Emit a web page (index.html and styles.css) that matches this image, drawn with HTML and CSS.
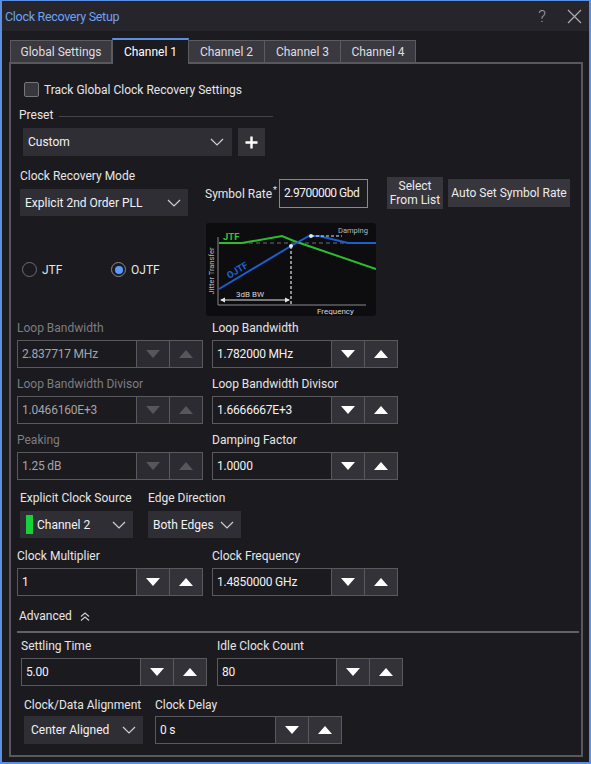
FILE: index.html
```html
<!DOCTYPE html>
<html lang="en">
<head>
    <meta charset="UTF-8">
    <title>Clock Recovery Setup</title>
    <link rel="stylesheet" href="styles.css">
</head>
<body>
    <div class="window">
        <!-- Title bar -->
        <div class="titlebar">
            <span class="title">Clock Recovery Setup</span>
            <span class="help">?</span>
            <svg class="close" width="15" height="15" viewBox="0 0 15 15"><path d="M1 1L14 14M14 1L1 14" stroke="#a9a9ad" stroke-width="1.3" fill="none"/></svg>
        </div>

        <!-- Tabs -->
        <div class="tabs">
            <div class="tab w-global">Global Settings</div>
            <div class="tab active w-ch1">Channel 1</div>
            <div class="tab w-ch2">Channel 2</div>
            <div class="tab w-ch3">Channel 3</div>
            <div class="tab w-ch4">Channel 4</div>
        </div>

        <div class="panel">
            <div class="chk-row">
                <span class="checkbox"></span>
                <span class="chk-label">Track Global Clock Recovery Settings</span>
            </div>

            <div class="preset-head">
                <span>Preset</span>
                <span class="rule"></span>
            </div>
            <div class="preset-row">
                <div class="dropdown w-preset">
                    <span>Custom</span>
                    <svg class="chev" width="14" height="8" viewBox="0 0 14 8"><path d="M1 1L7 7L13 1" stroke="#cfcfd3" stroke-width="1.2" fill="none"/></svg>
                </div>
                <div class="plus-btn">
                    <svg width="13" height="13" viewBox="0 0 13 13"><path d="M6.5 0.5V12.5M0.5 6.5H12.5" stroke="#fff" stroke-width="2.4"/></svg>
                </div>
            </div>

            <!-- Mode and symbol rate -->
            <div class="mode-row">
                <div class="mode-col">
                    <div class="lbl">Clock Recovery Mode</div>
                    <div class="dropdown w-mode">
                        <span>Explicit 2nd Order PLL</span>
                        <svg class="chev" width="14" height="8" viewBox="0 0 14 8"><path d="M1 1L7 7L13 1" stroke="#cfcfd3" stroke-width="1.2" fill="none"/></svg>
                    </div>
                </div>
                <div class="rate-group">
                    <span class="rate-label">Symbol Rate<sup>*</sup></span>
                    <div class="rate-input">2.9700000 Gbd</div>
                    <div class="btn select-btn">Select<br>From List</div>
                    <div class="btn auto-btn">Auto Set Symbol Rate</div>
                </div>
            </div>

            <!-- Transfer function choice -->
            <div class="tf-row">
                <div class="radios">
                    <label class="radio-item"><span class="radio"></span>JTF</label>
                    <label class="radio-item"><span class="radio on"></span>OJTF</label>
                </div>
                <svg class="diagram" width="170" height="93" viewBox="0 0 170 93">
                    <rect x="0" y="0" width="170" height="93" rx="3" fill="#0d0d10"/>
                    <line x1="12" y1="14" x2="12" y2="82" stroke="#8a8a8e" stroke-width="1"/>
                    <line x1="12" y1="82" x2="160" y2="82" stroke="#8a8a8e" stroke-width="1"/>
                    <text x="8" y="48" transform="rotate(-90 8 48)" text-anchor="middle" class="dg-small">Jitter Transfer</text>
                    <text x="111" y="91" class="dg-text">Frequency</text>
                    <line x1="36" y1="20" x2="170" y2="20" stroke="#6e6e72" stroke-width="1" stroke-dasharray="4 3"/>
                    <polyline points="13,20 36,20 76,13 88,18 170,46" fill="none" stroke="#2fbd2f" stroke-width="2"/>
                    <text x="17" y="17" class="dg-jtf">JTF</text>
                    <polyline points="13,66 85,23 103,13 113,13 142,20 170,20" fill="none" stroke="#1d5fd0" stroke-width="2"/>
                    <text x="33" y="50" transform="rotate(-31 33 50)" text-anchor="middle" class="dg-ojtf">OJTF</text>
                    <line x1="85" y1="23" x2="85" y2="82" stroke="#e6e6e6" stroke-width="1.2" stroke-dasharray="3 2"/>
                    <circle cx="85" cy="23" r="2" fill="#e6e6e6"/>
                    <line x1="105" y1="13" x2="136" y2="13" stroke="#e6e6e6" stroke-width="1.2" stroke-dasharray="3 2"/>
                    <circle cx="105" cy="13" r="2" fill="#e6e6e6"/>
                    <text x="132" y="10" class="dg-small">Damping</text>
                    <line x1="15" y1="77" x2="83" y2="77" stroke="#e6e6e6" stroke-width="1"/>
                    <path d="M14 77L19 74.5V79.5Z M84 77L79 74.5V79.5Z" fill="#e6e6e6"/>
                    <text x="44" y="74" text-anchor="middle" class="dg-text">3dB BW</text>
                </svg>
            </div>

            <!-- Loop parameters -->
            <div class="grid">
                <div class="field">
                    <div class="lbl off">Loop Bandwidth</div>
                    <div class="spin off"><span class="val">2.837717 MHz</span><span class="sbtn"><i class="dn"></i></span><span class="sbtn"><i class="up"></i></span></div>
                </div>
                <div class="field">
                    <div class="lbl">Loop Bandwidth</div>
                    <div class="spin"><span class="val">1.782000 MHz</span><span class="sbtn"><i class="dn"></i></span><span class="sbtn"><i class="up"></i></span></div>
                </div>
                <div class="field">
                    <div class="lbl off">Loop Bandwidth Divisor</div>
                    <div class="spin off"><span class="val">1.0466160E+3</span><span class="sbtn"><i class="dn"></i></span><span class="sbtn"><i class="up"></i></span></div>
                </div>
                <div class="field">
                    <div class="lbl">Loop Bandwidth Divisor</div>
                    <div class="spin"><span class="val">1.6666667E+3</span><span class="sbtn"><i class="dn"></i></span><span class="sbtn"><i class="up"></i></span></div>
                </div>
                <div class="field">
                    <div class="lbl off">Peaking</div>
                    <div class="spin off"><span class="val">1.25 dB</span><span class="sbtn"><i class="dn"></i></span><span class="sbtn"><i class="up"></i></span></div>
                </div>
                <div class="field">
                    <div class="lbl">Damping Factor</div>
                    <div class="spin"><span class="val">1.0000</span><span class="sbtn"><i class="dn"></i></span><span class="sbtn"><i class="up"></i></span></div>
                </div>
            </div>

            <!-- Clock source -->
            <div class="src-row">
                <div class="src-col">
                    <div class="lbl">Explicit Clock Source</div>
                    <div class="dropdown w-src">
                        <span class="swatch"></span>
                        <span>Channel 2</span>
                        <svg class="chev" width="14" height="8" viewBox="0 0 14 8"><path d="M1 1L7 7L13 1" stroke="#cfcfd3" stroke-width="1.2" fill="none"/></svg>
                    </div>
                </div>
                <div class="edge-col">
                    <div class="lbl">Edge Direction</div>
                    <div class="dropdown w-edge">
                        <span>Both Edges</span>
                        <svg class="chev" width="14" height="8" viewBox="0 0 14 8"><path d="M1 1L7 7L13 1" stroke="#cfcfd3" stroke-width="1.2" fill="none"/></svg>
                    </div>
                </div>
            </div>

            <div class="grid mult">
                <div class="field">
                    <div class="lbl">Clock Multiplier</div>
                    <div class="spin"><span class="val">1</span><span class="sbtn"><i class="dn"></i></span><span class="sbtn"><i class="up"></i></span></div>
                </div>
                <div class="field">
                    <div class="lbl">Clock Frequency</div>
                    <div class="spin"><span class="val">1.4850000 GHz</span><span class="sbtn"><i class="dn"></i></span><span class="sbtn"><i class="up"></i></span></div>
                </div>
            </div>

            <!-- Advanced -->
            <div class="adv">
                <span>Advanced</span>
                <svg class="adv-icon" width="10" height="9" viewBox="0 0 10 9"><path d="M1 4.5L5 1L9 4.5M1 8.5L5 5L9 8.5" stroke="#cfcfd3" stroke-width="1.1" fill="none"/></svg>
            </div>
            <div class="adv-rule"></div>

            <div class="grid settle">
                <div class="field">
                    <div class="lbl">Settling Time</div>
                    <div class="spin"><span class="val">5.00</span><span class="sbtn"><i class="dn"></i></span><span class="sbtn"><i class="up"></i></span></div>
                </div>
                <div class="field">
                    <div class="lbl">Idle Clock Count</div>
                    <div class="spin"><span class="val">80</span><span class="sbtn"><i class="dn"></i></span><span class="sbtn"><i class="up"></i></span></div>
                </div>
            </div>

            <div class="align-row">
                <div class="align-col">
                    <div class="lbl">Clock/Data Alignment</div>
                    <div class="dropdown w-align">
                        <span>Center Aligned</span>
                        <svg class="chev" width="14" height="8" viewBox="0 0 14 8"><path d="M1 1L7 7L13 1" stroke="#cfcfd3" stroke-width="1.2" fill="none"/></svg>
                    </div>
                </div>
                <div class="delay-col">
                    <div class="lbl">Clock Delay</div>
                    <div class="spin"><span class="val">0 s</span><span class="sbtn"><i class="dn"></i></span><span class="sbtn"><i class="up"></i></span></div>
                </div>
            </div>
        </div>
    </div>
</body>
</html>
```

FILE: styles.css
```css
* {
    margin: 0;
    padding: 0;
    box-sizing: border-box;
}

body {
    background-color: #1b1a1f;
    color: #e6e6e8;
    font-family: Roboto, "Liberation Sans", sans-serif;
    font-size: 12px;
}

.window {
    width: 591px;
    height: 764px;
    border: 2px solid #5b8fe3;
    border-top-width: 1px;
    background-color: #1c1b20;
    overflow: hidden;
}

/* Title bar */
.titlebar {
    height: 30px;
    background-color: #26252b;
    display: flex;
    align-items: center;
    padding: 0 7px 0 3px;
}

.title {
    flex: 1;
    color: #6ea2f5;
    font-size: 12.5px;
    letter-spacing: -0.3px;
}

.help {
    color: #9c9ca0;
    font-size: 17px;
    font-weight: 300;
    margin-right: 21px;
}

/* Tabs */
.tabs {
    height: 31px;
    display: flex;
    align-items: flex-end;
    padding-left: 8px;
}

.tab {
    height: 22px;
    background-color: #3a3940;
    border: 1px solid #5c5b61;
    border-bottom: none;
    display: flex;
    align-items: center;
    justify-content: center;
    color: #dedee0;
}

.tab + .tab {
    border-left: none;
}

.tab.active {
    height: 26px;
    margin-bottom: -2px;
    background-color: #1b1a1f;
    border-top: 2px solid #5b8fe3;
    border-left: 1px solid #5c5b61;
    border-right: 1px solid #5c5b61;
    color: #fff;
    position: relative;
    z-index: 1;
}

.w-global { width: 102px; }
.w-ch1 { width: 77px; }
.w-ch2 { width: 76px; }
.w-ch3 { width: 76px; }
.w-ch4 { width: 75px; }

/* Panel */
.panel {
    margin-left: 7px;
    width: 574px;
    height: 695px;
    border: 2px solid #59585d;
    padding: 0 6px;
    background-color: #1b1a1f;
}

.lbl {
    height: 14px;
    line-height: 14px;
    white-space: nowrap;
    color: #e6e6e8;
}

.lbl.off {
    color: #7d7d80;
}

.chk-row {
    margin-top: 18px;
    margin-left: 7px;
    height: 15px;
    display: flex;
    align-items: center;
}

.checkbox {
    width: 15px;
    height: 15px;
    border: 1px solid #77767b;
    border-radius: 2px;
    background-color: #38373d;
}

.chk-label {
    margin-left: 5px;
}

.preset-head {
    margin-top: 11px;
    margin-left: 2px;
    width: 254px;
    height: 14px;
    display: flex;
    align-items: center;
}

.preset-head .rule {
    flex: 1;
    height: 1px;
    margin-left: 6px;
    margin-top: 3px;
    background-color: #45444a;
}

.preset-row {
    margin-top: 6px;
    margin-left: 6px;
    height: 28px;
    display: flex;
}

.dropdown {
    height: 27px;
    background-color: #2f2e34;
    display: flex;
    align-items: center;
    padding: 0 7px 0 5px;
    color: #f2f2f4;
    white-space: nowrap;
}

.dropdown .chev {
    margin-left: auto;
}

.w-preset { width: 209px; height: 28px; }
.w-preset .chev { margin-right: 1px; }

.plus-btn {
    width: 27px;
    height: 28px;
    margin-left: 6px;
    background-color: #333238;
    display: flex;
    align-items: center;
    justify-content: center;
}

/* Mode / symbol rate */
.mode-row {
    margin-top: 13px;
    display: flex;
}

.mode-col {
    margin-left: 3px;
    width: 168px;
}

.mode-col .dropdown {
    margin-top: 6px;
}

.w-mode { width: 168px; }

.rate-group {
    margin-left: 17px;
    margin-top: 8px;
    height: 32px;
    display: flex;
    align-items: center;
}

.rate-label {
    width: 74px;
    white-space: nowrap;
}

.rate-label sup {
    font-size: 9px;
    vertical-align: 5px;
    margin-left: 1px;
}

.rate-input {
    width: 89px;
    height: 29px;
    border: 1px solid #8a898e;
    background-color: #1b1a1f;
    padding-left: 4px;
    line-height: 27px;
    color: #f2f2f4;
    letter-spacing: -0.5px;
    white-space: nowrap;
    overflow: hidden;
}

.btn {
    background-color: #37363c;
    color: #ececee;
    text-align: center;
    display: flex;
    align-items: center;
    justify-content: center;
}

.select-btn {
    width: 56px;
    height: 32px;
    margin-left: 19px;
    line-height: 14px;
}

.auto-btn {
    width: 122px;
    height: 28px;
    margin-left: 5px;
}

/* JTF / OJTF */
.tf-row {
    margin-top: 7px;
    height: 93px;
    display: flex;
}

.radios {
    width: 189px;
    padding-left: 5px;
    display: flex;
    align-items: center;
}

.radio-item {
    display: flex;
    align-items: center;
    width: 89px;
}

.radio {
    width: 15px;
    height: 15px;
    border: 1.5px solid #6f6e73;
    border-radius: 50%;
    margin-right: 5px;
    display: flex;
    align-items: center;
    justify-content: center;
}

.radio.on {
    border-color: #8a898e;
}

.radio.on::after {
    content: "";
    width: 8px;
    height: 8px;
    border-radius: 50%;
    background-color: #5b9bff;
}

.diagram text {
    font-family: Roboto, "Liberation Sans", sans-serif;
}

.dg-small {
    font-size: 7.5px;
    fill: #b8b8bc;
}

.dg-text {
    font-size: 8px;
    fill: #d6d6da;
}

.dg-jtf {
    font-size: 9.5px;
    font-weight: bold;
    fill: #2fc52f;
}

.dg-ojtf {
    font-size: 9.5px;
    font-weight: bold;
    fill: #1f63d6;
}

/* Spin fields */
.grid {
    margin-top: 5px;
    display: grid;
    grid-template-columns: 186px 186px;
    column-gap: 9px;
    row-gap: 9px;
}

.field .lbl {
    margin-bottom: 5px;
}

.spin {
    height: 28px;
    display: flex;
    border: 1px solid #5a595e;
}

.spin .val {
    flex: 1;
    display: flex;
    align-items: center;
    padding-left: 4px;
    background-color: #1b1a1f;
    color: #f2f2f4;
    white-space: nowrap;
    letter-spacing: -0.2px;
}

.spin .sbtn {
    width: 33px;
    border-left: 1px solid #5a595e;
    background-color: #333238;
    display: flex;
    align-items: center;
    justify-content: center;
}

.dn {
    width: 0;
    height: 0;
    border-left: 7.5px solid transparent;
    border-right: 7.5px solid transparent;
    border-top: 8px solid #fff;
}

.up {
    width: 0;
    height: 0;
    border-left: 7.5px solid transparent;
    border-right: 7.5px solid transparent;
    border-bottom: 8px solid #fff;
}

.spin.off .val {
    color: #a4a4a8;
}

.spin.off .sbtn {
    background-color: #2c2b31;
}

.spin.off .dn {
    border-top-color: #57565b;
}

.spin.off .up {
    border-bottom-color: #57565b;
}

/* Clock source */
.src-row {
    margin-top: 11px;
    display: flex;
}

.src-col {
    margin-left: 3px;
    width: 113px;
}

.edge-col {
    margin-left: 15px;
    width: 93px;
}

.src-col .dropdown,
.edge-col .dropdown {
    margin-top: 6px;
}

.w-src { width: 113px; padding-left: 6px; }
.w-edge { width: 93px; }

.swatch {
    width: 7px;
    height: 19px;
    background-color: #16d13a;
    margin-right: 4px;
}

.grid.mult {
    margin-top: 11px;
}

/* Advanced */
.adv {
    margin-top: 13px;
    margin-left: 2px;
    height: 14px;
    display: flex;
    align-items: center;
}

.adv-icon {
    margin-left: 8px;
}

.adv-rule {
    margin-top: 8px;
    margin-left: 0;
    width: 562px;
    height: 2px;
    background-color: #626167;
}

.grid.settle {
    margin-top: 6px;
    padding-left: 4px;
    column-gap: 10px;
}

.align-row {
    margin-top: 12px;
    display: flex;
}

.align-col {
    margin-left: 7px;
    width: 119px;
}

.align-col .dropdown {
    margin-top: 4px;
    height: 28px;
    padding-left: 7px;
}

.w-align { width: 119px; }

.delay-col {
    margin-left: 12px;
    width: 187px;
}

.delay-col .lbl {
    margin-bottom: 4px;
}
```
